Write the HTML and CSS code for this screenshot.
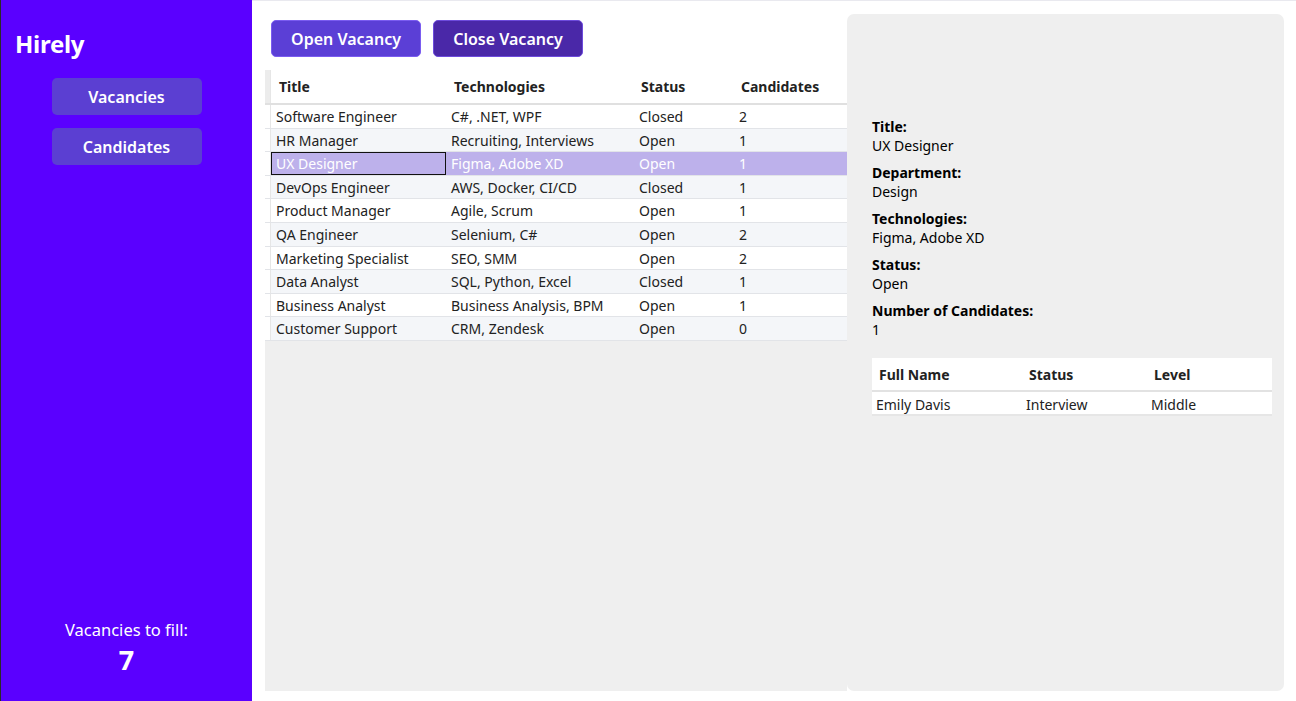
FILE: index.html
```html
<!DOCTYPE html>
<html>
<head>
<meta charset="utf-8">
<link rel="stylesheet" href="styles.css">
</head>
<body>
<div class="app">
  <aside class="sidebar">
    <div class="brand">Hirely</div>
    <nav class="nav">
      <button class="nav-btn">Vacancies</button>
      <button class="nav-btn">Candidates</button>
    </nav>
    <div class="fill">
      <div class="fill-label">Vacancies to fill:</div>
      <div class="fill-num">7</div>
    </div>
  </aside>
  <main class="main">
    <section class="left">
      <div class="toolbar">
        <button class="act open">Open Vacancy</button>
        <button class="act close">Close Vacancy</button>
      </div>
      <div class="grid">
        <div class="row head">
          <div class="rh"></div>
          <div class="c c1">Title</div>
          <div class="c c2">Technologies</div>
          <div class="c c3">Status</div>
          <div class="c c4">Candidates</div>
        </div>
        <div class="row">
          <div class="rh"></div><div class="c c1">Software Engineer</div><div class="c c2">C#, .NET, WPF</div><div class="c c3">Closed</div><div class="c c4">2</div>
        </div>
        <div class="row alt">
          <div class="rh"></div><div class="c c1">HR Manager</div><div class="c c2">Recruiting, Interviews</div><div class="c c3">Open</div><div class="c c4">1</div>
        </div>
        <div class="row sel">
          <div class="rh"></div><div class="c c1 focus">UX Designer</div><div class="c c2">Figma, Adobe XD</div><div class="c c3">Open</div><div class="c c4">1</div>
        </div>
        <div class="row alt">
          <div class="rh"></div><div class="c c1">DevOps Engineer</div><div class="c c2">AWS, Docker, CI/CD</div><div class="c c3">Closed</div><div class="c c4">1</div>
        </div>
        <div class="row">
          <div class="rh"></div><div class="c c1">Product Manager</div><div class="c c2">Agile, Scrum</div><div class="c c3">Open</div><div class="c c4">1</div>
        </div>
        <div class="row alt">
          <div class="rh"></div><div class="c c1">QA Engineer</div><div class="c c2">Selenium, C#</div><div class="c c3">Open</div><div class="c c4">2</div>
        </div>
        <div class="row">
          <div class="rh"></div><div class="c c1">Marketing Specialist</div><div class="c c2">SEO, SMM</div><div class="c c3">Open</div><div class="c c4">2</div>
        </div>
        <div class="row alt">
          <div class="rh"></div><div class="c c1">Data Analyst</div><div class="c c2">SQL, Python, Excel</div><div class="c c3">Closed</div><div class="c c4">1</div>
        </div>
        <div class="row">
          <div class="rh"></div><div class="c c1">Business Analyst</div><div class="c c2">Business Analysis, BPM</div><div class="c c3">Open</div><div class="c c4">1</div>
        </div>
        <div class="row alt">
          <div class="rh"></div><div class="c c1">Customer Support</div><div class="c c2">CRM, Zendesk</div><div class="c c3">Open</div><div class="c c4">0</div>
        </div>
      </div>
    </section>
    <section class="panel">
      <div class="details">
        <div class="field"><div class="lbl">Title:</div><div class="val">UX Designer</div></div>
        <div class="field"><div class="lbl">Department:</div><div class="val">Design</div></div>
        <div class="field"><div class="lbl">Technologies:</div><div class="val">Figma, Adobe XD</div></div>
        <div class="field"><div class="lbl">Status:</div><div class="val">Open</div></div>
        <div class="field"><div class="lbl">Number of Candidates:</div><div class="val">1</div></div>
      </div>
      <div class="cand">
        <div class="crow chead">
          <div class="cc k1">Full Name</div><div class="cc k2">Status</div><div class="cc k3">Level</div>
        </div>
        <div class="crow">
          <div class="cc k1">Emily Davis</div><div class="cc k2">Interview</div><div class="cc k3">Middle</div>
        </div>
      </div>
    </section>
  </main>
</div>
</body>
</html>
```

FILE: styles.css
```css
* { box-sizing: border-box; }
html, body { margin: 0; padding: 0; }
body {
  font-family: "Noto Sans", "Open Sans", sans-serif;
  color: #222;
  background: #fff;
  width: 1296px;
  height: 701px;
  overflow: hidden;
}
.app { display: flex; height: 701px; }

.sidebar {
  width: 252px;
  flex: none;
  background: #5a00ff;
  border-left: 1px solid #2b2b2b;
  display: flex;
  flex-direction: column;
  color: #fff;
}
.brand {
  font-size: 24px;
  font-weight: 700;
  padding: 28px 0 0 14px;
  line-height: 32px;
  letter-spacing: -0.3px;
}
.nav {
  display: flex;
  flex-direction: column;
  align-items: center;
  gap: 13px;
  margin-top: 18px;
}
.nav-btn {
  width: 150px;
  height: 37px;
  border: none;
  border-radius: 5px;
  background: #5b3fd2;
  color: #fff;
  font-family: inherit;
  font-size: 16px;
  font-weight: 600;
  padding-top: 2px;
}
.fill {
  margin-top: auto;
  padding-bottom: 24px;
  text-align: center;
}
.fill-label { font-size: 16.5px; line-height: 22px; }
.fill-num { font-size: 27px; font-weight: 700; line-height: 34px; margin-top: 2px; }

.main {
  flex: 1;
  display: flex;
  padding: 13px 12px 10px 13px;
  border-top: 1px solid #e9e9ef;
}
.left {
  width: 582px;
  display: flex;
  flex-direction: column;
}
.toolbar {
  display: flex;
  gap: 12px;
  padding: 6px 0 0 6px;
}
.act {
  width: 150px;
  height: 37px;
  border-radius: 5px;
  color: #fff;
  font-family: inherit;
  font-size: 16px;
  font-weight: 600;
  padding-top: 2px;
}
.act.open { background: #5b3fd6; border: 1px solid #7a5cf0; }
.act.close { background: #4a28a8; border: 1px solid #6d4bdc; }

.grid {
  flex: 1;
  margin-top: 13px;
  background: #efefef;
  font-size: 14px;
}
.row {
  display: flex;
  height: 23.6px;
  line-height: 23px;
  background: #fff;
  border-bottom: 1px solid #e2e4e8;
}
.row.alt { background: #f4f6f9; }
.row.head {
  height: 35px;
  line-height: 34px;
  font-weight: 700;
  border-bottom: 2px solid #e0e0e0;
}
.rh { width: 6px; flex: none; background: #fff; border-right: 1px solid #e6e6e6; }
.head .rh { background: #ececec; }
.c { padding-left: 5px; white-space: nowrap; overflow: hidden; }
.head .c { padding-left: 8px; }
.head .c3, .head .c4 { padding-left: 7px; }
.c1 { width: 175px; }
.c2 { width: 188px; }
.c3 { width: 100px; }
.c4 { flex: 1; }
.row.sel { background: #bdb1eb; color: #fff; line-height: 24px; }
.focus { border: 1px solid #111; padding-left: 4px; line-height: 22px; }

.panel {
  flex: 1;
  background: #efefef;
  border-radius: 7px;
  padding: 103px 12px 0 25px;
  color: #000;
  font-size: 14px;
}
.field { margin-bottom: 7px; }
.lbl { font-weight: 700; line-height: 19px; }
.val { line-height: 20px; }
.cand {
  margin-top: 18px;
  background: #fff;
}
.crow { display: flex; height: 24px; line-height: 25px; border-bottom: 2px solid #e6e6e6; color: #222; }
.crow.chead { height: 34px; line-height: 34px; font-weight: 700; border-bottom: 2px solid #e2e2e2; }
.cc { padding-left: 4px; }
.chead .cc { padding-left: 7px; }
.k1 { width: 150px; }
.k2 { width: 125px; }
.k3 { flex: 1; }
```
